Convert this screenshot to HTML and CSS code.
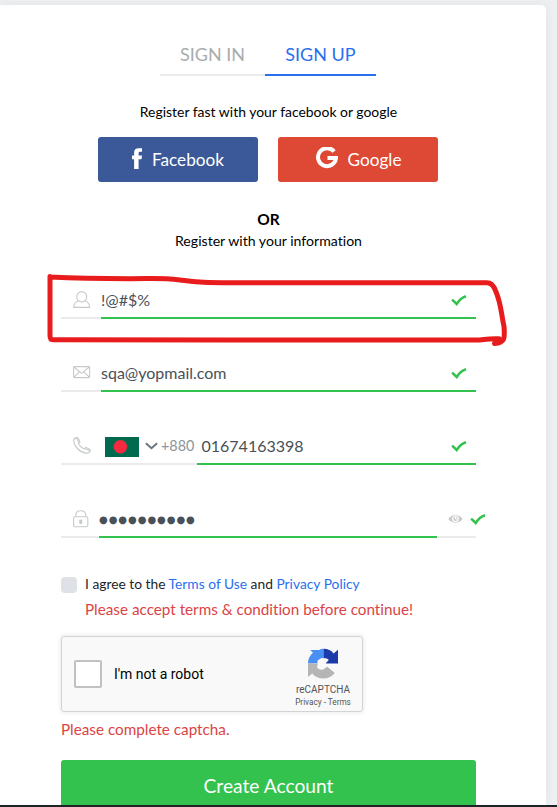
FILE: index.html
```html
<!DOCTYPE html>
<html lang="en">
<head>
<meta charset="utf-8">
<title>Sign up</title>
<link rel="stylesheet" href="styles.css">
</head>
<body>
<svg class="defs" width="0" height="0"><defs>
<symbol id="check" viewBox="0 0 16 11"><path d="M1.100 4.700 5.700 9 C8 5.400 11 2.600 15 1.300" fill="none" stroke="#34c24e" stroke-width="2.500"/></symbol>
</defs></svg>
<main class="card">
  <nav class="tabs"><a class="tab tab-in">SIGN IN</a><a class="tab tab-up">SIGN UP</a></nav>
  <p class="lead">Register fast with your facebook or google</p>
  <div class="social">
    <a class="btn facebook"><svg width="10" height="21" viewBox="0 0 10 21"><path d="M2.100 21V11.200H0V7.400h2.100V4.800C2.100 1.600 3.600.2 6.800.2H10v3.600H8.200c-1.200 0-1.600.5-1.600 1.600v2H10l-.5 3.800H6.600V21Z" fill="#fff"/></svg><span>Facebook</span></a>
    <a class="btn google"><svg width="22" height="22" viewBox="0 0 22 22"><path d="M18.100 4.600A9 9 0 1 0 20 10.900H11.500" fill="none" stroke="#fff" stroke-width="4"/></svg><span>Google</span></a>
  </div>
  <div class="or">OR</div>
  <p class="info">Register with your information</p>

  <form class="form">
    <div class="field">
      <div class="icon"><svg width="18" height="18" viewBox="0 0 18 18"><ellipse cx="8.700" cy="5.800" rx="5" ry="5.200"/><path d="M5.500 10C2.500 10.900.8 13 .7 16.400h16c-.1-3.400-1.800-5.500-4.800-6.400"/></svg></div>
      <div class="value"><span>!@#$%</span><svg class="check" width="16" height="11"><use href="#check"/></svg></div>
    </div>
    <div class="field">
      <div class="icon mail"><svg width="18" height="13" viewBox="0 0 18 13"><rect x=".6" y=".6" width="16" height="11" rx=".8"/><path d="m1 1 7.600 6.400L16.200 1M1 11.200l5.400-5.600M16.200 11.200l-5.400-5.600"/></svg></div>
      <div class="value"><span>sqa@yopmail.com</span><svg class="check" width="16" height="11"><use href="#check"/></svg></div>
    </div>
    <div class="field phone">
      <div class="icon call"><svg width="18" height="17" viewBox="0 0 18 17"><path d="M3.300.6C1.800 1 .6 2.200.7 4 1.400 10.300 7.400 15.700 13.600 16.200c1.700 0 3-.8 3.600-2.400.1-.9-.2-1.300-.9-1.700l-2.600-1.400c-.7-.4-1.300-.2-1.800.4l-.8.9C8.600 11 6.600 9 5.400 6.600l1-1c.5-.5.6-1 .2-1.700L5.200 1.300C4.800.6 4.100.3 3.300.6Z"/><path d="m3.500 1 2.300 4.400M12 11.600l4.800 2.200"/></svg></div>
      <div class="country"><svg class="flag" width="34" height="20" viewBox="0 0 34 20"><path fill="#006a4e" d="M0 0h34v20H0z"/><circle cx="15.400" cy="9.800" r="6.800" fill="#f42a41"/></svg><svg class="arrow" width="13" height="8" viewBox="0 0 13 8"><path d="m.9 1.200 5.600 5 5.600-5" fill="none" stroke="#6c757d" stroke-width="2"/></svg><span>+880</span></div>
      <div class="value"><span>01674163398</span><svg class="check" width="16" height="11"><use href="#check"/></svg></div>
    </div>
    <div class="field password">
      <div class="icon lock"><svg width="16" height="18" viewBox="0 0 16 18"><rect x=".6" y="6.800" width="14.200" height="10" rx="1.500"/><path d="M2.800 6.500V5.200C2.800 2.400 4.800.7 7.700.7s5 1.700 5 4.500v1.300"/><rect x="6.800" y="10" width="1.900" height="3.400" rx=".7" fill="#c5cacb"/></svg></div>
      <div class="value"><span class="dots">●●●●●●●●●●</span></div>
      <div class="tail"><svg width="15" height="10" viewBox="0 0 15 10"><path d="M.3 5C3.700-.5 11-.5 14.600 5 11 10 3.700 10 .3 5Z" fill="#c9cacb"/><circle cx="7.400" cy="4.800" r="2.800" fill="none" stroke="#fff" stroke-width="1.200"/><path d="M7.400 2.500v2.400h2" fill="none" stroke="#fff"/></svg><svg width="16" height="11"><use href="#check"/></svg></div>
    </div>
    <div class="agree">
      <div class="box"></div>
      <div><div class="terms">I agree to the <a>Terms of Use</a> and <a>Privacy Policy</a></div><div class="error">Please accept terms &amp; condition before continue!</div></div>
    </div>
    <div class="captcha">
      <div class="tick"></div><span class="robot">I'm not a robot</span>
      <div class="brand">
        <svg width="32" height="31" viewBox="0 0 32 31"><path d="M1 15.500C1 10.700 3 7.200 6 4.800L3.200 2h9.200C14 1 15 .9 16.500.8v9.500c-2-.4-3.600.2-4.800 1.600l2.900 3.400Z" fill="#4a90f4"/><path d="M16.500.8c4.600 0 7.700 1.600 10 4.600L31 1.800v13.700H18.400l3.400-3.400c-1.200-1.600-2.800-2.100-5.300-1.800Z" fill="#1c3aa9"/><path d="M1 15.500h12l-3.300 3.300c2.500 4.200 7.200 3.600 10.300-.2l7.800 6.300C21.800 32.500 10.700 32 5.200 25.400L1 29Z" fill="#b5b5b5"/><path d="m15.500 10-5 2.400v5l4.800 4 6.300-4.600-3.200-1.300 2.200-3Z" fill="#f9f9f9"/></svg>
        <div class="re">reCAPTCHA</div><div class="pt">Privacy - Terms</div>
      </div>
    </div>
    <div class="error capterr">Please complete captcha.</div>
    <div class="create">Create Account</div>
  </form>
  <svg class="mark" width="557" height="90" viewBox="0 265 557 90"><path d="M50 276.500v59q0 4.200 2.700 4.200L230 340H476c8 0 8-1.300 20-1.300h3M50 277c20 1 55 1.700 80 1.700s30-1 50 1.300c20 2.200 22 2.700 50 2.700H487q5.500 0 8.500 7.800c6 14 5.500 23 8.500 36 1 12 1 16-9.500 17"/></svg>
</main>
</body>
</html>
```
FILE: styles.css
```css
* { box-sizing: border-box; }
body { margin: 0; height: 807px; padding-top: 5px; overflow: hidden; background: #edeff1; border-bottom: 2px solid #202326; font-family: Lato, sans-serif; font-variant-ligatures: none; color: #000; }
p { margin: 0; }
.defs { position: absolute; }
.card { position: relative; width: 546px; height: 800px; padding: 35px 70px 0 61px; background: #fff; border-top-right-radius: 5px; box-shadow: 0 0 12px rgba(0,0,0,.05); overflow: hidden; }
.tabs { display: flex; margin-left: 99px; height: 36px; font-size: 18px; line-height: 28px; text-align: center; }
.tab { border-bottom: 2px solid #ebebeb; white-space: nowrap; }
.tab-in { width: 105px; color: #a9acae; }
.tab-up { width: 111px; color: #2970ef; border-color: #2970ef; }
.lead, .info { width: 415px; text-align: center; font-size: 13.950px; line-height: 20px; }
.lead { margin-top: 26px; }
.social { display: flex; gap: 20px; margin: 15px 0 0 37px; }
.btn { display: flex; width: 160px; height: 45px; border-radius: 3px; align-items: center; justify-content: center; gap: 10px; color: #fff; font-size: 17.200px; }
.btn svg { margin-bottom: 3px; }
.facebook { background: #3b5998; }
.google { background: #de4935; padding-left: 1px; }
.or { width: 415px; margin-top: 27px; text-align: center; font-weight: 700; font-size: 15.500px; line-height: 20px; }
.info { margin-top: 2px; font-size: 14.100px; }
.form { width: 415px; margin-top: 28px; }
.field { display: flex; height: 40px; margin-bottom: 33px; font-size: 16px; line-height: 40px; color: #495057; }
.icon { flex: none; width: 40px; border-bottom: 2px solid #ebebeb; padding: 12px 0 0 12px; }
.icon svg { display: block; fill: none; stroke: #c5cacb; stroke-width: 1.100; }
.mail { padding-top: 14px; }
.lock { width: 38px; padding-top: 12px; }
.value { flex: 1; display: flex; align-items: center; justify-content: space-between; padding: 4px 9px 0 0; border-bottom: 2px solid #34c24e; }
.value span { height: 40px; }
.check { margin-top: 1px; }
.country { display: flex; width: 96px; align-items: center; padding: 4px 0 0 4px; border-bottom: 2px solid #ebebeb; color: #8e9499; font-size: 14.400px; }
.flag { margin-top: 2px; }
.arrow { margin: 0 3px 0 6px; }
.phone .value { padding-left: 4.500px; }
.value .dots { font-family: "DejaVu Sans", sans-serif; font-size: 10px; letter-spacing: .95px; padding-top: 1px; }
.tail { display: flex; align-items: center; gap: 7px; width: 39px; border-bottom: 2px solid #ebebeb; padding: 4px 0 0 11px; }
.tail svg { flex: none; }
.agree { display: flex; gap: 8px; margin-top: 36px; }
.box { width: 16px; height: 16px; margin-top: 3px; border-radius: 4px; background: #dee2e6; }
.terms { font-size: 13.800px; line-height: 20px; color: #212529; }
.terms a { color: #2970ef; }
.error { color: #db4444; font-size: 15.250px; line-height: 20px; margin-top: 5px; white-space: nowrap; }
.captcha { display: flex; align-items: center; width: 302px; height: 76px; margin-top: 17px; padding-left: 12px; border: 1px solid #d3d3d3; border-radius: 3px; background: #f9f9f9; box-shadow: 0 0 4px 1px rgba(0,0,0,.08); font-family: Roboto, sans-serif; }
.tick { width: 28px; height: 28px; border: 2px solid #c1c1c1; border-radius: 2px; background: #fff; }
.robot { margin-left: 12px; font-size: 14px; }
.brand { margin: 7px 10px 0 auto; width: 58px; text-align: center; color: #555; }
.brand svg { display: block; margin: 0 auto; }
.re { font-size: 10px; line-height: 12px; margin-top: 5px; }
.pt { font-size: 8.200px; line-height: 12px; white-space: nowrap; }
.error.capterr { margin-top: 7px; }
.create { height: 50px; margin-top: 21px; border-radius: 3px; background: #34c24e; color: #fff; text-align: center; font-size: 19.200px; line-height: 52px; }
.mark { position: absolute; left: 0; top: 260px; fill: none; stroke: #e81c1c; stroke-width: 5; stroke-linecap: round; stroke-linejoin: round; }
```
